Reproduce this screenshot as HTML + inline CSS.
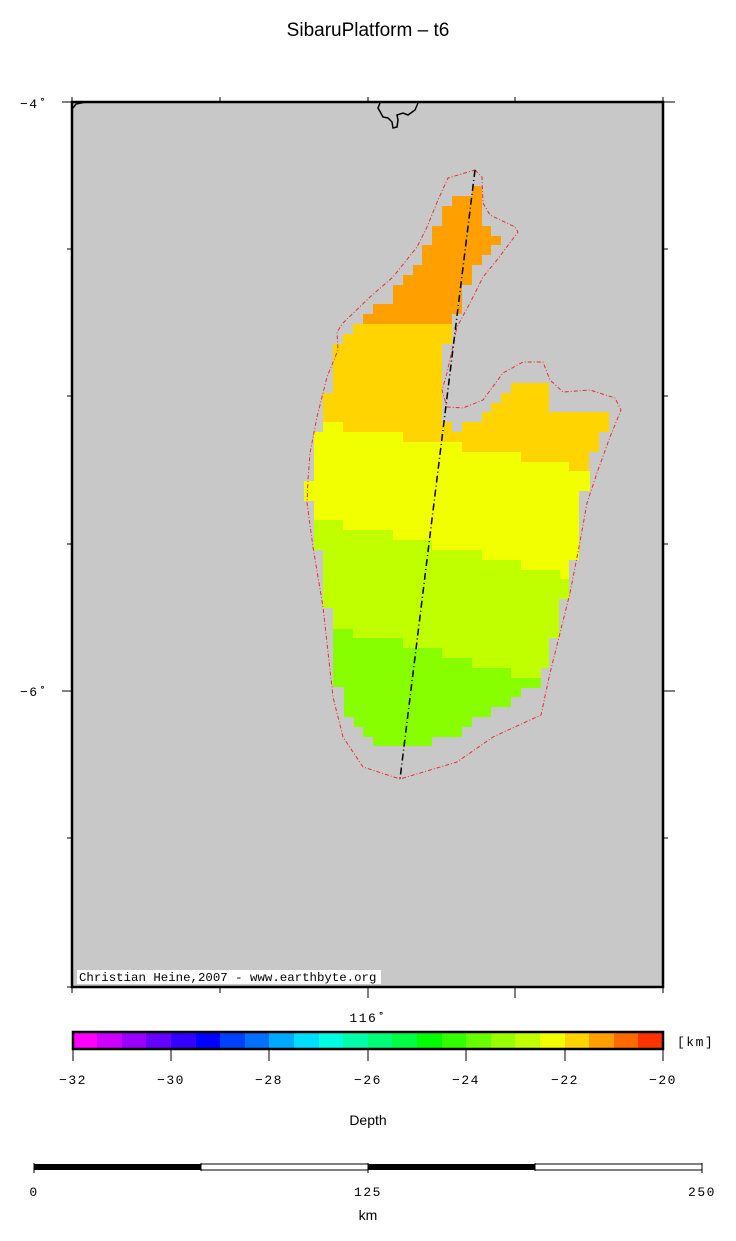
<!DOCTYPE html>
<html><head><meta charset="utf-8"><style>
html,body{margin:0;padding:0;background:#fff;}
svg{display:block;}
.m{font-family:"Liberation Mono",monospace;font-size:13px;fill:#000;letter-spacing:1.5px;}
.s{font-family:"Liberation Sans",sans-serif;fill:#000;}
</style></head><body>
<svg width="736" height="1241" viewBox="0 0 736 1241" xmlns="http://www.w3.org/2000/svg">
<text class="s" x="368" y="36" font-size="19" text-anchor="middle">SibaruPlatform – t6</text>
<rect x="72" y="102" width="591" height="885" fill="#c8c8c8"/>
<polygon fill="#ffa000" points="482,186 482,226 491,226 491,236 501,236 501,245 491,245 491,255 482,255 482,265 472,265 472,285 462,285 462,314 452,314 452,324 363,324 363,314 373,314 373,304 393,304 393,285 403,285 403,275 413,275 413,265 422,265 422,245 432,245 432,226 442,226 442,206 452,206 452,196 472,196 472,186"/>
<polygon fill="#ffd400" points="353,324 452,324 452,344 442,344 442,422 452,422 452,432 462,432 462,422 482,422 482,412 491,412 491,403 501,403 501,393 511,393 511,383 549,383 549,412 609,412 609,432 599,432 599,452 589,452 589,471 569,471 569,462 521,462 521,452 462,452 462,442 403,442 403,432 343,432 343,422 323,422 323,393 333,393 333,344 343,344 343,334 353,334"/>
<polygon fill="#f2ff00" points="314,432 323,432 323,422 343,422 343,432 403,432 403,442 462,442 462,452 521,452 521,462 569,462 569,471 590,471 590,491 579,491 579,560 569,560 569,579 560,579 560,570 521,570 521,560 482,560 482,550 432,550 432,540 393,540 393,530 343,530 343,520 314,520 314,501 304,501 304,481 314,481"/>
<polygon fill="#c0ff00" points="314,520 343,520 343,530 393,530 393,540 432,540 432,550 482,550 482,560 521,560 521,570 560,570 560,579 569,579 569,599 559,599 559,638 549,638 549,668 541,668 541,678 511,678 511,668 472,668 472,658 442,658 442,648 403,648 403,638 353,638 353,629 333,629 333,608 323,608 323,550 314,550"/>
<polygon fill="#88ff00" points="333,629 353,629 353,638 403,638 403,648 442,648 442,658 472,658 472,668 511,668 511,678 541,678 541,688 521,688 521,697 511,697 511,707 491,707 491,717 472,717 472,727 462,727 462,737 432,737 432,746 373,746 373,737 363,737 363,727 354,727 354,717 344,717 344,687 333,687"/>
<polygon fill="none" stroke="#e83030" stroke-width="1" stroke-dasharray="4,2,1,2" points="475,170 482,177 483,203 490,215 515,227 518,232 497,260 483,277 470,303 457,327 447,373 442,390 447,407 463,408 483,400 503,373 523,362 543,362 550,380 563,392 590,390 615,398 621,410 610,437 598,470 587,503 579,547 570,593 560,633 550,673 541,715 493,737 457,762 400,779 363,767 343,737 333,697 323,607 313,547 307,503 308,480 310,453 317,417 327,377 338,350 337,332 343,323 370,297 393,277 417,247 427,227 438,200 448,178"/>
<line x1="475" y1="170" x2="400" y2="779" stroke="#000" stroke-width="1.5" stroke-dasharray="7,3,1,3"/>
<polyline fill="none" stroke="#000" stroke-width="1.5" points="380,103 378,108 383,117 388,118 392,122 393,128 397,127 398,120 397,115 403,113 408,115 415,110 418,103"/>
<polyline fill="none" stroke="#000" stroke-width="1.5" points="73,108 76,104 86,102"/>
<rect x="77" y="970" width="304" height="14" fill="#fff"/>
<text x="79" y="981" font-family="Liberation Mono,monospace" font-size="12.4" fill="#000">Christian Heine,2007 - www.earthbyte.org</text>
<rect x="72" y="102" width="591" height="885" fill="none" stroke="#000" stroke-width="2.5"/>
<g stroke="#000" stroke-width="1">
<line x1="72" y1="97" x2="72" y2="102"/><line x1="220" y1="97" x2="220" y2="102"/><line x1="368" y1="97" x2="368" y2="102"/><line x1="515" y1="97" x2="515" y2="102"/><line x1="663" y1="97" x2="663" y2="102"/>
<line x1="72" y1="987" x2="72" y2="993"/><line x1="220" y1="987" x2="220" y2="993"/><line x1="368" y1="987" x2="368" y2="998"/><line x1="515" y1="987" x2="515" y2="998"/><line x1="663" y1="987" x2="663" y2="993"/>
<line x1="62" y1="102" x2="72" y2="102"/><line x1="67" y1="249" x2="72" y2="249"/><line x1="67" y1="396" x2="72" y2="396"/><line x1="67" y1="544" x2="72" y2="544"/><line x1="62" y1="691" x2="72" y2="691"/><line x1="67" y1="838" x2="72" y2="838"/><line x1="67" y1="987" x2="72" y2="987"/>
<line x1="663" y1="102" x2="675" y2="102"/><line x1="663" y1="249" x2="668" y2="249"/><line x1="663" y1="396" x2="668" y2="396"/><line x1="663" y1="544" x2="668" y2="544"/><line x1="663" y1="691" x2="675" y2="691"/><line x1="663" y1="838" x2="668" y2="838"/>
</g>
<text class="m" x="20" y="108">−4˚</text>
<text class="m" x="20" y="696">−6˚</text>
<text class="m" x="368" y="1022" text-anchor="middle">116˚</text>
<g>
<rect x="73" y="1032" width="25" height="17" fill="#ff00ff"/><rect x="97" y="1032" width="25" height="17" fill="#cc00ff"/><rect x="122" y="1032" width="25" height="17" fill="#9900ff"/><rect x="146" y="1032" width="25" height="17" fill="#6600ff"/><rect x="171" y="1032" width="25" height="17" fill="#3300ff"/><rect x="196" y="1032" width="25" height="17" fill="#0000ff"/><rect x="220" y="1032" width="25" height="17" fill="#0040ff"/><rect x="245" y="1032" width="25" height="17" fill="#0070ff"/><rect x="269" y="1032" width="25" height="17" fill="#00a8ff"/><rect x="294" y="1032" width="25" height="17" fill="#00ddff"/><rect x="319" y="1032" width="25" height="17" fill="#00ffe0"/><rect x="343" y="1032" width="25" height="17" fill="#00ffaa"/><rect x="368" y="1032" width="25" height="17" fill="#00ff77"/><rect x="392" y="1032" width="25" height="17" fill="#00ff44"/><rect x="417" y="1032" width="25" height="17" fill="#00ff00"/><rect x="442" y="1032" width="25" height="17" fill="#33ff00"/><rect x="466" y="1032" width="25" height="17" fill="#66ff00"/><rect x="491" y="1032" width="25" height="17" fill="#99ff00"/><rect x="515" y="1032" width="25" height="17" fill="#c0ff00"/><rect x="540" y="1032" width="25" height="17" fill="#f2ff00"/><rect x="565" y="1032" width="25" height="17" fill="#ffd400"/><rect x="589" y="1032" width="25" height="17" fill="#ffa000"/><rect x="614" y="1032" width="25" height="17" fill="#ff6a00"/><rect x="638" y="1032" width="25" height="17" fill="#ff3300"/>
</g>
<rect x="73" y="1032" width="590" height="17" fill="none" stroke="#000" stroke-width="2.5"/>
<g stroke="#000" stroke-width="1">
<line x1="73" y1="1049" x2="73" y2="1061"/><line x1="171" y1="1049" x2="171" y2="1061"/><line x1="269" y1="1049" x2="269" y2="1061"/><line x1="368" y1="1049" x2="368" y2="1061"/><line x1="466" y1="1049" x2="466" y2="1061"/><line x1="565" y1="1049" x2="565" y2="1061"/><line x1="663" y1="1049" x2="663" y2="1061"/>
</g>
<g class="m" text-anchor="middle">
<text x="73" y="1084">−32</text><text x="171" y="1084">−30</text><text x="269" y="1084">−28</text><text x="368" y="1084">−26</text><text x="466" y="1084">−24</text><text x="565" y="1084">−22</text><text x="663" y="1084">−20</text>
</g>
<text class="m" x="677" y="1046">[km]</text>
<text class="s" x="368" y="1125" font-size="14" text-anchor="middle">Depth</text>
<rect x="34" y="1164" width="167" height="6" fill="#000"/>
<rect x="201" y="1164" width="167" height="6" fill="#fff" stroke="#000" stroke-width="1"/>
<rect x="368" y="1164" width="167" height="6" fill="#000"/>
<rect x="535" y="1164" width="167" height="6" fill="#fff" stroke="#000" stroke-width="1"/>
<g stroke="#000" stroke-width="1">
<line x1="34" y1="1163" x2="34" y2="1173"/><line x1="201" y1="1163" x2="201" y2="1171"/><line x1="368" y1="1163" x2="368" y2="1173"/><line x1="535" y1="1163" x2="535" y2="1171"/><line x1="702" y1="1163" x2="702" y2="1173"/>
</g>
<g class="m" text-anchor="middle">
<text x="34" y="1196">0</text><text x="368" y="1196">125</text><text x="702" y="1196">250</text>
</g>
<text class="s" x="368" y="1220" font-size="14" text-anchor="middle">km</text>
</svg>
</body></html>
